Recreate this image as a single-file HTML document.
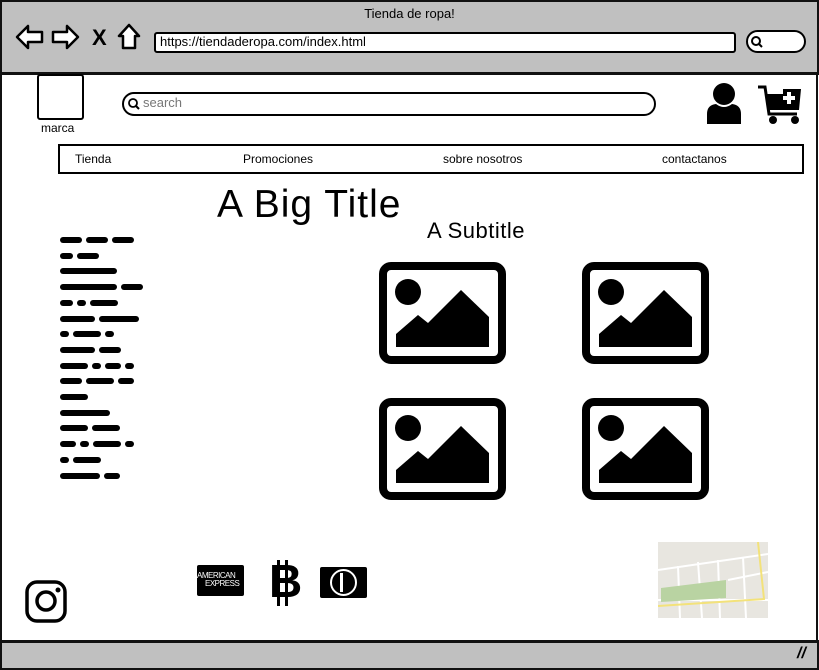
<!DOCTYPE html>
<html><head><meta charset="utf-8"><style>
body{margin:0;width:819px;height:669px;overflow:hidden;background:#fff;font-family:"Liberation Sans",sans-serif;position:relative}
.a{position:absolute}
.sq{position:absolute;height:6px;background:#000;border-radius:3px}
</style></head><body>
<div class="a" style="left:0;top:0;width:815px;height:70px;background:#c0c0c0;border:2px solid #111;border-bottom:3px solid #111"></div>
<div class="a" style="left:0;top:6px;width:819px;text-align:center;font-size:13px">Tienda de ropa!</div>
<svg class="a" style="left:14px;top:22px" width="130" height="30" viewBox="0 0 130 30">
<path d="M3 15 L14 4 L14 10 L28 10 L28 20 L14 20 L14 26 Z" fill="#fff" stroke="#000" stroke-width="2.5" stroke-linejoin="round"/>
<path d="M64 15 L53 4 L53 10 L39 10 L39 20 L53 20 L53 26 Z" fill="#fff" stroke="#000" stroke-width="2.5" stroke-linejoin="round"/>
<text x="78" y="23" font-size="22" font-weight="bold" font-family="Liberation Sans">X</text>
<path d="M115 3 L105 14 L109 14 L109 26 L121 26 L121 14 L125 14 Z" fill="#fff" stroke="#000" stroke-width="2.5" stroke-linejoin="round"/>
</svg>
<div class="a" style="left:154px;top:32px;width:574px;height:17px;background:#fff;border:2.5px solid #000;border-radius:3px;font-size:13px;line-height:16px;padding-left:4px">https://tiendaderopa.com/index.html</div>
<div class="a" style="left:746px;top:30px;width:56px;height:19px;background:#fff;border:2.5px solid #000;border-radius:12px"></div>
<svg class="a" style="left:750px;top:35px" width="14" height="14"><circle cx="6" cy="6" r="4" fill="none" stroke="#000" stroke-width="2"/><path d="M9 9 L12 12" stroke="#000" stroke-width="2"/></svg>
<div class="a" style="left:0;top:72px;width:2px;height:570px;background:#111"></div>
<div class="a" style="left:816px;top:72px;width:2px;height:570px;background:#111"></div>
<div class="a" style="left:37px;top:74px;width:43px;height:42px;border:2px solid #000;border-radius:3px"></div>
<div class="a" style="left:41px;top:121px;font-size:12px">marca</div>
<div class="a" style="left:122px;top:92px;width:530px;height:20px;border:2.5px solid #000;border-radius:12px"></div>
<svg class="a" style="left:127px;top:97px" width="14" height="14"><circle cx="6" cy="6" r="4" fill="none" stroke="#000" stroke-width="1.8"/><path d="M9 9 L12 12" stroke="#000" stroke-width="2"/></svg>
<div class="a" style="left:143px;top:95px;font-size:13px;color:#777">search</div>
<svg class="a" style="left:704px;top:82px" width="40" height="44"><circle cx="20" cy="12" r="11"/><path d="M3 42 L3 32 Q3 23 12 22 Q20 28 28 22 Q37 23 37 32 L37 42 Z"/></svg>
<svg class="a" style="left:757px;top:84px" width="48" height="42"><path d="M1 3 L8 3 L12 30 L40 30" fill="none" stroke="#000" stroke-width="3"/><path d="M10 10 L10 26 L42 26 L44 5 L26 5 L26 10 Z"/><path d="M32 8 V20 M26 14 H38" stroke="#fff" stroke-width="4"/><circle cx="16" cy="36" r="4"/><circle cx="38" cy="36" r="4"/></svg>
<div class="a" style="left:58px;top:144px;width:742px;height:26px;border:2.5px solid #000"></div>
<div class="a" style="left:75px;top:152px;font-size:12px">Tienda</div>
<div class="a" style="left:243px;top:152px;font-size:12px">Promociones</div>
<div class="a" style="left:443px;top:152px;font-size:12px">sobre nosotros</div>
<div class="a" style="left:662px;top:152px;font-size:12px">contactanos</div>
<div class="a" style="left:217px;top:183px;font-size:39px;letter-spacing:1px">A Big Title</div>
<div class="a" style="left:427px;top:218px;font-size:22px;letter-spacing:0.5px">A Subtitle</div>
<div id="sq"></div>
<svg class="a" style="left:0;top:0" width="819" height="669">
<defs><g id="im"><rect x="4" y="4" width="119" height="94" rx="8" fill="none" stroke="#000" stroke-width="8"/><circle cx="29" cy="30" r="13"/><polygon points="17,85 17,72 39,53 49,61 82,28 110,55 110,85"/></g></defs>
<use href="#im" x="379" y="262"/><use href="#im" x="582" y="262"/>
<use href="#im" x="379" y="398"/><use href="#im" x="582" y="398"/>
</svg>
<svg class="a" style="left:25px;top:580px" width="44" height="44"><rect x="2" y="2" width="38" height="39" rx="10" fill="none" stroke="#000" stroke-width="3.5"/><circle cx="21" cy="21" r="9" fill="none" stroke="#000" stroke-width="3.5"/><circle cx="33" cy="10" r="2.5"/></svg>
<div class="a" style="left:197px;top:565px;width:47px;height:31px;background:#000;border-radius:2px"></div>
<div class="a" style="left:197px;top:572px;width:47px;font-size:8px;color:#fff;line-height:8px;letter-spacing:-0.5px">AMERICAN<br><span style="padding-left:8px">EXPRESS</span></div>
<div class="a" style="left:269px;top:556px;font-size:46px;font-weight:bold;line-height:50px">B</div>
<div class="a" style="left:277px;top:560px;width:3px;height:46px;background:#000"></div>
<div class="a" style="left:285px;top:560px;width:3px;height:46px;background:#000"></div>
<div class="a" style="left:320px;top:567px;width:47px;height:31px;background:#000;border-radius:2px"></div>
<div class="a" style="left:330px;top:569px;width:23px;height:23px;border:2.5px solid #fff;border-radius:50%"></div>
<div class="a" style="left:340px;top:573px;width:3px;height:19px;background:#fff"></div>
<svg class="a" style="left:658px;top:542px" width="110" height="76"><rect width="110" height="76" fill="#e8e6e0"/><path d="M0 28 L110 12 M40 20 L44 76 M60 18 L62 76 M20 24 L22 76 M85 15 L88 76 M70 38 L110 30 M0 58 L110 58" stroke="#fff" stroke-width="2"/><polygon points="3,46 68,38 68,56 3,60" fill="#b9d3a2"/><path d="M0 64 L106 57 L100 0" stroke="#f3e27a" stroke-width="2" fill="none"/></svg>
<div class="a" style="left:0;top:640px;width:815px;height:25px;background:#c0c0c0;border:2px solid #111;border-top:3px solid #111"></div>
<div class="a" style="left:797px;top:645px;font-size:16px;font-weight:bold;font-style:italic">//</div>
<script>
var L=[[22,22,22],[13,22],[57],[57,22],[13,9,28],[35,40],[9,28,9],[35,22],[28,9,16,9],[22,28,16],[28],[50],[28,28],[16,9,28,9],[9,28],[40,16]];
var h='';L.forEach(function(r,i){var x=60;r.forEach(function(w){h+='<div class="sq" style="left:'+x+'px;top:'+(237+i*15.7)+'px;width:'+w+'px"></div>';x+=w+4;});});
document.getElementById('sq').innerHTML=h;
</script>
</body></html>
